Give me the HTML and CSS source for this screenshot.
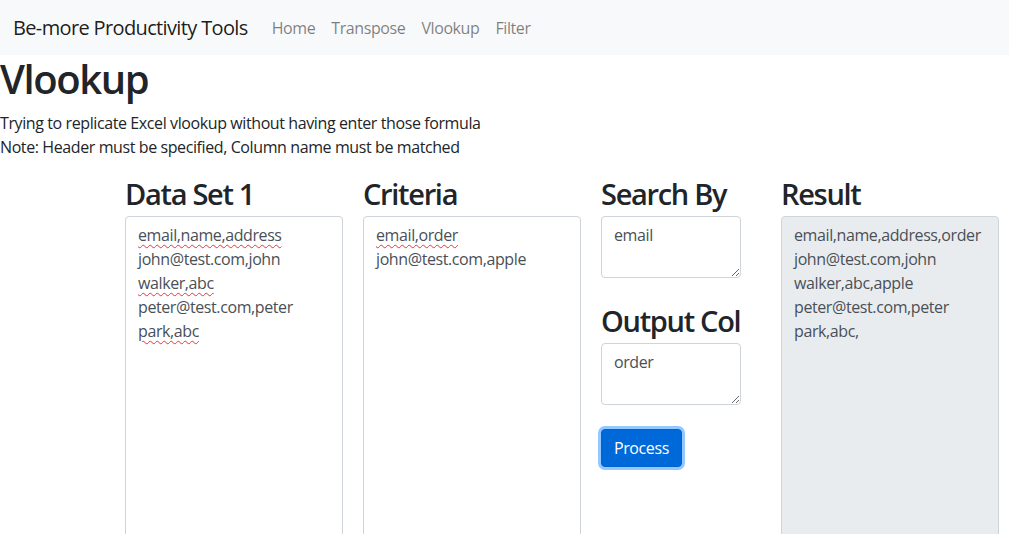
FILE: index.html
```html
<!DOCTYPE html>
<html lang="en">
<head>
<meta charset="utf-8">
<title>Vlookup - Be-more Productivity Tools</title>
<link rel="stylesheet" href="styles.css">
</head>
<body>
<nav class="navbar">
  <a class="brand" href="#">Be-more Productivity Tools</a>
  <ul class="nav-links">
    <li><a href="#">Home</a></li>
    <li><a href="#">Transpose</a></li>
    <li><a href="#">Vlookup</a></li>
    <li><a href="#">Filter</a></li>
  </ul>
</nav>
<main class="page">
  <h1 class="title">Vlookup</h1>
  <p class="intro">Trying to replicate Excel vlookup without having enter those formula</p>
  <p class="intro last">Note: Header must be specified, Column name must be matched</p>
  <div class="tool-row">
    <section class="col col-wide">
      <h2 class="col-title">Data Set 1</h2>
      <div class="box box-tall">
        <span class="line"><span class="spell">email,name,address</span></span>
        <span class="line">john@test.com,john</span>
        <span class="line"><span class="spell">walker,abc</span></span>
        <span class="line">peter@test.com,peter</span>
        <span class="line"><span class="spell">park,abc</span></span>
      </div>
    </section>
    <section class="col col-wide">
      <h2 class="col-title">Criteria</h2>
      <div class="box box-tall">
        <span class="line"><span class="spell">email,order</span></span>
        <span class="line">john@test.com,apple</span>
      </div>
    </section>
    <section class="col col-narrow">
      <h2 class="col-title">Search By</h2>
      <textarea class="field" rows="2">email</textarea>
      <h2 class="col-title second">Output Col</h2>
      <textarea class="field" rows="2">order</textarea>
      <button class="btn-process" type="button">Process</button>
    </section>
    <section class="col col-wide col-result">
      <h2 class="col-title">Result</h2>
      <div class="box box-tall box-readonly">
        <span class="line">email,name,address,order</span>
        <span class="line">john@test.com,john</span>
        <span class="line">walker,abc,apple</span>
        <span class="line">peter@test.com,peter</span>
        <span class="line">park,abc,</span>
      </div>
    </section>
  </div>
</main>
</body>
</html>
```

FILE: styles.css
```css
* { box-sizing: border-box; }

body {
  margin: 0;
  font-family: "Open Sans", "Noto Sans", "Liberation Sans", sans-serif;
  font-size: 16px;
  line-height: 1.5;
  letter-spacing: -0.025em;
  color: #212529;
  background: #fff;
  overflow: hidden;
}

.navbar {
  display: flex;
  align-items: center;
  height: 55px;
  padding: 0 16px 0 13px;
  background: #f8f9fa;
}

.brand {
  font-size: 20px;
  line-height: 30px;
  letter-spacing: -0.032em;
  color: rgba(0, 0, 0, 0.9);
  text-decoration: none;
  margin-right: 16px;
}

.nav-links {
  display: flex;
  list-style: none;
  margin: 0;
  padding: 0;
}

.nav-links a {
  display: block;
  padding: 8px;
  color: rgba(0, 0, 0, 0.5);
  text-decoration: none;
}

.page {
  padding: 0;
}

.title {
  margin: 0 0 8px;
  font-size: 40px;
  font-weight: 600;
  letter-spacing: -0.035em;
  line-height: 1.2;
}

.intro {
  margin: 0;
}

.intro.last {
  margin-bottom: 16px;
}

.tool-row {
  display: flex;
  align-items: flex-start;
  gap: 20px;
  padding-left: 125px;
}

.col-wide { width: 218px; }
.col-narrow { width: 140px; }
.col-result { margin-left: 20px; }

.col-title {
  margin: 0 0 3px;
  font-size: 29px;
  font-weight: 600;
  letter-spacing: -0.045em;
  line-height: 38px;
  white-space: nowrap;
}

.col-title.second {
  margin-top: 24px;
}

.box {
  border: 1px solid #ced4da;
  border-radius: 4px;
  padding: 6px 12px;
  color: #495057;
  background: #fff;
}

.box-tall { height: 380px; }

.box-readonly { background: #e9ecef; }

.line {
  display: block;
  white-space: nowrap;
}

.spell {
  text-decoration: underline wavy #e0383e;
  text-decoration-thickness: 1px;
  text-underline-offset: 3px;
}

.field {
  display: block;
  width: 140px;
  padding: 6px 12px;
  border: 1px solid #ced4da;
  border-radius: 4px;
  font: inherit;
  letter-spacing: inherit;
  line-height: 1.5;
  color: #495057;
  resize: vertical;
  height: 62px;
}

.btn-process {
  margin-top: 24px;
  padding: 6px 12px;
  font: inherit;
  letter-spacing: inherit;
  line-height: 1.5;
  color: #fff;
  background: #0069d9;
  border: 1px solid #0062cc;
  border-radius: 4px;
  box-shadow: 0 0 0 3px rgba(38, 143, 255, 0.5);
  cursor: pointer;
}
```
